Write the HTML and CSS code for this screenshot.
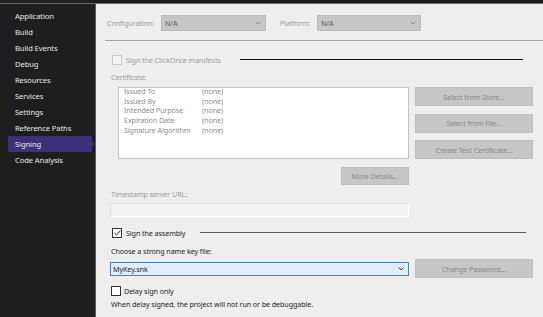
FILE: index.html
```html
<!DOCTYPE html>
<html lang="en">
<head>
    <meta charset="UTF-8">
    <title>Signing</title>
    <link rel="stylesheet" href="styles.css">
</head>
<body>
    <div class="window">
        <div class="topbar"></div>
        <div class="main">
            <nav class="sidebar">
                <div class="nav-item">Application</div>
                <div class="nav-item">Build</div>
                <div class="nav-item">Build Events</div>
                <div class="nav-item">Debug</div>
                <div class="nav-item">Resources</div>
                <div class="nav-item">Services</div>
                <div class="nav-item">Settings</div>
                <div class="nav-item">Reference Paths</div>
                <div class="nav-item active">Signing</div>
                <div class="nav-item">Code Analysis</div>
            </nav>

            <div class="page">
                <div class="config-row">
                    <span class="config-label">Configuration:</span>
                    <div class="combo combo-config">
                        <span>N/A</span>
                        <svg class="chevron" width="6" height="4" viewBox="0 0 6 4"><polyline points="0.5,0.5 3,3 5.5,0.5" fill="none" stroke="#8c8c8c" stroke-width="1"/></svg>
                    </div>
                    <span class="config-label platform-label">Platform:</span>
                    <div class="combo combo-platform">
                        <span>N/A</span>
                        <svg class="chevron" width="6" height="4" viewBox="0 0 6 4"><polyline points="0.5,0.5 3,3 5.5,0.5" fill="none" stroke="#8c8c8c" stroke-width="1"/></svg>
                    </div>
                </div>

                <div class="rule"></div>

                <div class="check-row clickonce">
                    <span class="checkbox disabled"></span>
                    <span class="check-text">Sign the ClickOnce manifests</span>
                    <span class="group-line black"></span>
                </div>

                <div class="field-label disabled-text">Certificate:</div>

                <div class="cert">
                    <div class="cert-box">
                        <div class="cert-list">
                            <div class="cert-row"><span class="cert-key">Issued To</span><span>(none)</span></div>
                            <div class="cert-row"><span class="cert-key">Issued By</span><span>(none)</span></div>
                            <div class="cert-row"><span class="cert-key">Intended Purpose</span><span>(none)</span></div>
                            <div class="cert-row"><span class="cert-key">Expiration Date</span><span>(none)</span></div>
                            <div class="cert-row"><span class="cert-key">Signature Algorithm</span><span>(none)</span></div>
                        </div>
                    </div>
                    <div class="cert-buttons">
                        <div class="btn btn-wide">Select from Store...</div>
                        <div class="btn btn-wide">Select from File...</div>
                        <div class="btn btn-wide">Create Test Certificate...</div>
                    </div>
                </div>

                <div class="more-row">
                    <div class="btn btn-more">More Details...</div>
                </div>

                <div class="field-label disabled-text timestamp-label">Timestamp server URL:</div>
                <div class="text-input"></div>

                <div class="check-row sign-row">
                    <span class="checkbox checked">
                        <svg width="7" height="6" viewBox="0 0 7 6"><polyline points="0.5,3 2.6,5 6.5,0.6" fill="none" stroke="#222" stroke-width="1"/></svg>
                    </span>
                    <span class="check-text dark">Sign the assembly</span>
                    <span class="group-line gray"></span>
                </div>

                <div class="field-label choose-label">Choose a strong name key file:</div>

                <div class="key-row">
                    <div class="key-combo">
                        <span>MyKey.snk</span>
                        <svg class="chevron" width="6" height="4" viewBox="0 0 6 4"><polyline points="0.5,0.5 3,3 5.5,0.5" fill="none" stroke="#333" stroke-width="1"/></svg>
                    </div>
                    <div class="btn btn-wide">Change Password...</div>
                </div>

                <div class="check-row delay-row">
                    <span class="checkbox plain"></span>
                    <span class="check-text dark">Delay sign only</span>
                </div>

                <div class="field-label note">When delay signed, the project will not run or be debuggable.</div>
            </div>
        </div>
    </div>
</body>
</html>
```

FILE: styles.css
```css
body {
    margin: 0;
    overflow: hidden;
    font-family: "Noto Sans", "Open Sans", sans-serif;
    font-size: 7.2px;
    letter-spacing: -0.1px;
}
.window {
    width: 543px;
    height: 317px;
    display: flex;
    flex-direction: column;
    background-color: #eeeeee;
}
.topbar {
    height: 3px;
    background-color: #1d1d1d;
    border-bottom: 1px solid #6d55d8;
}
.main {
    flex: 1;
    display: flex;
}
.sidebar {
    width: 95px;
    background-color: #1e1e1e;
    border-right: 1px solid #5c5c5c;
    padding-top: 4px;
    font-size: 7.6px;
}
.nav-item {
    height: 16px;
    line-height: 16px;
    padding-left: 15px;
    color: #e8e8e8;
    white-space: nowrap;
}
.nav-item.active {
    position: relative;
    margin-left: 8px;
    width: 77px;
    padding-left: 7px;
    background-color: #3d2f78;
}
.nav-item.active::after {
    content: "";
    position: absolute;
    right: -3px;
    top: 5px;
    border-left: 3px solid #3d2f78;
    border-top: 3px solid transparent;
    border-bottom: 3px solid transparent;
}
.page {
    flex: 1;
    padding-left: 14px;
    color: #1e1e1e;
}
.config-row {
    margin-top: 11px;
    margin-left: -3px;
    height: 16px;
    display: flex;
    align-items: center;
}
.config-label {
    color: #9a9a9a;
    width: 54px;
}
.platform-label {
    margin-left: 14px;
    width: 37px;
}
.combo {
    height: 14px;
    border: 1px solid #bcbcbc;
    background-color: #c6c6c6;
    color: #5a5a5a;
    display: flex;
    align-items: center;
    justify-content: space-between;
    padding: 0 4px 0 3px;
}
.combo-config {
    width: 96px;
}
.combo-platform {
    width: 95px;
}
.rule {
    margin-top: 9px;
    margin-left: -5px;
    height: 1px;
    background-color: #a5a5a5;
}
.check-row {
    height: 11px;
    display: flex;
    align-items: center;
}
.clickonce {
    margin-top: 13px;
    margin-left: 2px;
    width: 411px;
}
.checkbox {
    width: 8px;
    height: 8px;
    border: 1px solid #333333;
    background-color: #ffffff;
    display: flex;
    align-items: center;
    justify-content: center;
}
.checkbox.disabled {
    border-color: #c8c8c8;
    background-color: #f4f4f4;
}
.check-text {
    margin-left: 4px;
    color: #9d9d9d;
    white-space: nowrap;
}
.check-text.dark {
    color: #1e1e1e;
}
.group-line {
    height: 1px;
    flex: none;
    margin-left: auto;
}
.group-line.black {
    width: 283px;
    background-color: #111111;
}
.group-line.gray {
    width: 326px;
    background-color: #5a5a5a;
}
.field-label {
    height: 10px;
    line-height: 10px;
    margin-left: 1px;
    white-space: nowrap;
}
.disabled-text {
    color: #9d9d9d;
}
.field-label.disabled-text {
    margin-top: 7px;
}
.cert {
    margin-top: 5px;
    margin-left: 8px;
    display: flex;
    gap: 6px;
}
.cert-box {
    width: 289px;
    height: 70px;
    background-color: #ffffff;
    border: 1px solid #c3c3c3;
}
.cert-list {
    margin-top: -1px;
    padding-left: 5px;
    color: #8e8e8e;
}
.cert-row {
    height: 9.7px;
    line-height: 9.7px;
    display: flex;
    white-space: nowrap;
}
.cert-key {
    width: 78px;
}
.cert-buttons {
    display: flex;
    flex-direction: column;
    justify-content: space-between;
    height: 72px;
}
.btn {
    background-color: #c6c6c6;
    border: 1px solid #bdbdbd;
    color: #8a8a8a;
    display: flex;
    align-items: center;
    justify-content: center;
    white-space: nowrap;
}
.btn-wide {
    width: 116px;
    height: 17px;
}
.btn-more {
    width: 66px;
    height: 16px;
}
.more-row {
    margin-top: 8px;
    width: 299px;
    display: flex;
    justify-content: flex-end;
}
.field-label.timestamp-label {
    margin-top: 4px;
}
.text-input {
    margin-top: 4px;
    width: 297px;
    height: 12px;
    background-color: #f2f2f2;
    border: 1px solid;
    border-color: #dedede #ffffff #ffffff #dedede;
}
.sign-row {
    margin-top: 10px;
    margin-left: 2px;
    width: 414px;
}
.choose-label {
    margin-top: 8px;
}
.key-row {
    margin-top: 3px;
    height: 19px;
    display: flex;
    align-items: center;
    gap: 6px;
}
.key-combo {
    width: 291px;
    height: 12px;
    padding: 0 4px 0 2px;
    background-color: #e2eefa;
    border: 1px solid #3f83c6;
    display: flex;
    align-items: center;
    justify-content: space-between;
}
.delay-row {
    margin-top: 7px;
    margin-left: 1px;
}
.delay-row .check-text {
    margin-left: 3px;
}
.note {
    margin-top: 3px;
}
```
